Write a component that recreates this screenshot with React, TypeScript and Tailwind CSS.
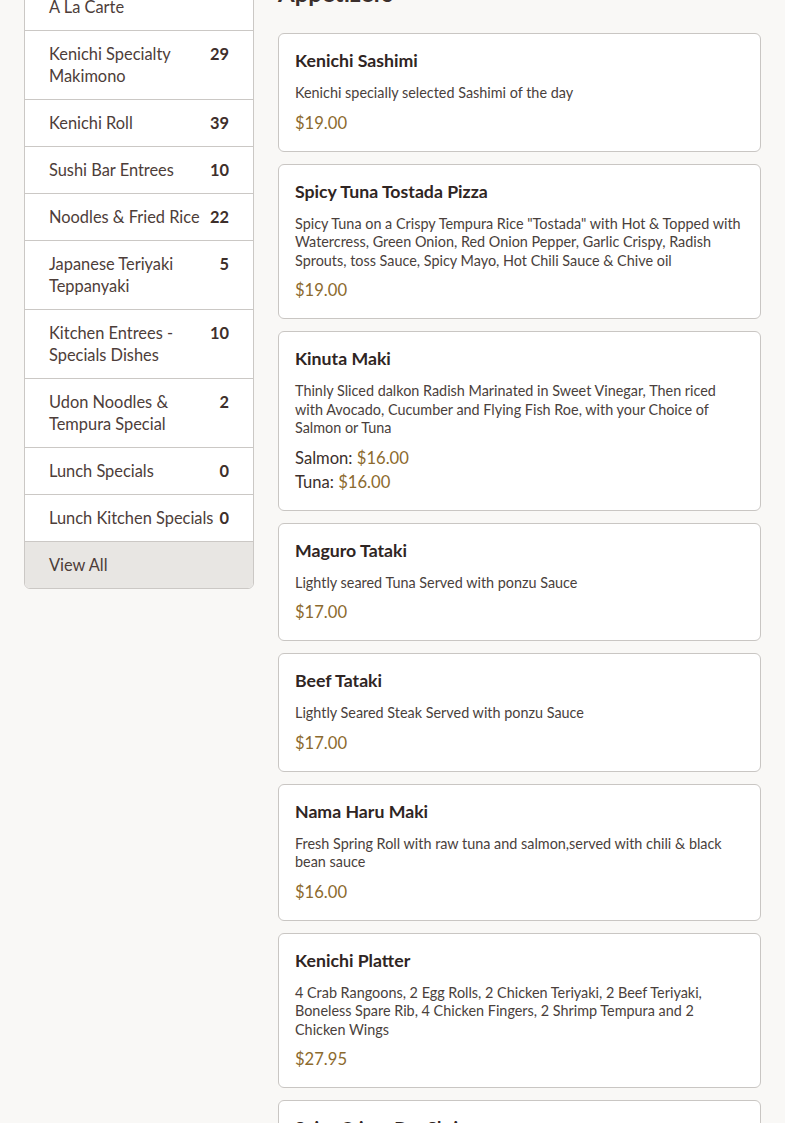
import React from "react";

const cats: { name: string; count?: number }[] = [
  { name: "A La Carte" },
  { name: "Kenichi Specialty Makimono", count: 29 },
  { name: "Kenichi Roll", count: 39 },
  { name: "Sushi Bar Entrees", count: 10 },
  { name: "Noodles & Fried Rice", count: 22 },
  { name: "Japanese Teriyaki Teppanyaki", count: 5 },
  { name: "Kitchen Entrees - Specials Dishes", count: 10 },
  { name: "Udon Noodles & Tempura Special", count: 2 },
  { name: "Lunch Specials", count: 0 },
  { name: "Lunch Kitchen Specials", count: 0 },
];

type Item = {
  title: string;
  desc: string;
  price?: string;
  options?: { label: string; price: string }[];
};

const items: Item[] = [
  { title: "Kenichi Sashimi", desc: "Kenichi specially selected Sashimi of the day", price: "$19.00" },
  {
    title: "Spicy Tuna Tostada Pizza",
    desc: 'Spicy Tuna on a Crispy Tempura Rice "Tostada" with Hot & Topped with Watercress, Green Onion, Red Onion Pepper, Garlic Crispy, Radish Sprouts, toss Sauce, Spicy Mayo, Hot Chili Sauce & Chive oil',
    price: "$19.00",
  },
  {
    title: "Kinuta Maki",
    desc: "Thinly Sliced dalkon Radish Marinated in Sweet Vinegar, Then riced with Avocado, Cucumber and Flying Fish Roe, with your Choice of Salmon or Tuna",
    options: [
      { label: "Salmon:", price: "$16.00" },
      { label: "Tuna:", price: "$16.00" },
    ],
  },
  { title: "Maguro Tataki", desc: "Lightly seared Tuna Served with ponzu Sauce", price: "$17.00" },
  { title: "Beef Tataki", desc: "Lightly Seared Steak Served with ponzu Sauce", price: "$17.00" },
  {
    title: "Nama Haru Maki",
    desc: "Fresh Spring Roll with raw tuna and salmon,served with chili & black bean sauce",
    price: "$16.00",
  },
  {
    title: "Kenichi Platter",
    desc: "4 Crab Rangoons, 2 Egg Rolls, 2 Chicken Teriyaki, 2 Beef Teriyaki, Boneless Spare Rib, 4 Chicken Fingers, 2 Shrimp Tempura and 2 Chicken Wings",
    price: "$27.95",
  },
  { title: "Spicy Crispy Dry Shrimp", desc: "Crispy shrimp tossed with spicy dry pepper", price: "$16.00" },
];

export default function App() {
  return (
    <div
      className="min-h-[1123px] bg-[#f9f8f6] text-[#3b2f2c] overflow-hidden"
      style={{ fontFamily: "Lato, 'Noto Sans', sans-serif" }}
    >
      <div className="flex gap-6 px-6 items-start">
        <aside className="w-[230px] shrink-0 -mt-[17px] bg-white border border-[#cbc8c5] rounded-b-md overflow-hidden">
          {cats.map((c) => (
            <div
              key={c.name}
              className="flex justify-between gap-1 px-6 py-3 border-b border-[#cbc8c5] text-[16.4px] leading-[22px]"
            >
              <span className="text-[#4d3d39]">{c.name}</span>
              {c.count !== undefined && (
                <span className="font-bold text-[#3e2f2b]">{c.count}</span>
              )}
            </div>
          ))}
          <div className="px-6 py-3 bg-[#e8e6e3] text-[16.4px] leading-[22px] text-[#4d3d39]">
            View All
          </div>
        </aside>
        <main className="w-[483px] shrink-0 -mt-[22px]">
          <h2 className="text-[24px] leading-[30px] font-bold text-[#3b2f2c] mb-[25px]">Appetizers</h2>
          <div className="flex flex-col gap-3">
            {items.map((it) => (
              <div key={it.title} className="bg-white border border-[#c9c6c3] rounded-md p-4">
                <div className="text-[17.7px] leading-[21px] font-bold text-[#2f2523] mb-[13px]">{it.title}</div>
                <div className="text-[14.4px] leading-[18.5px] text-[#4a3f3c] mb-2">{it.desc}</div>
                {it.price && (
                  <div className="text-[16.6px] leading-[24px] text-[#8c6a2e]">{it.price}</div>
                )}
                {it.options &&
                  it.options.map((o) => (
                    <div key={o.label} className="text-[16.6px] leading-[24px] text-[#3b2f2c]">
                      {o.label} <span className="text-[#8c6a2e]">{o.price}</span>
                    </div>
                  ))}
              </div>
            ))}
          </div>
        </main>
      </div>
    </div>
  );
}
